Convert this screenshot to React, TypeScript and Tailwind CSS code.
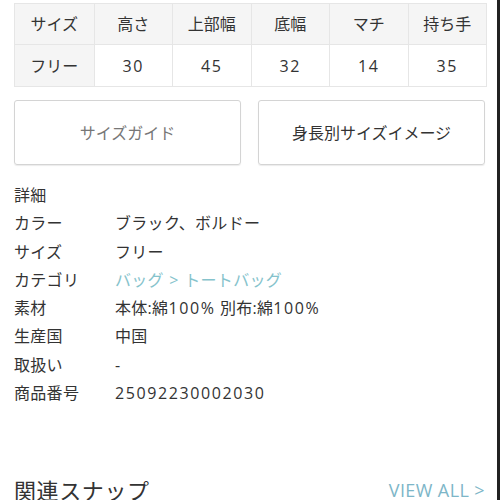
import React from "react";

const headers = ["サイズ", "高さ", "上部幅", "底幅", "マチ", "持ち手"];
const values = ["フリー", "30", "45", "32", "14", "35"];

const N = ({ children }: { children: React.ReactNode }) => (
  <span className="tracking-[1.6px]">{children}</span>
);

const rows: [string, React.ReactNode][] = [
  ["カラー", "ブラック、ボルドー"],
  ["サイズ", "フリー"],
  ["カテゴリ", <span className="text-[#86c3cc]">バッグ <span className="px-[1px]">&gt;</span> トートバッグ</span>],
  [
    "素材",
    <span>
      本体:綿<N>100%</N> 別布:綿<N>100%</N>
    </span>,
  ],
  ["生産国", "中国"],
  ["取扱い", "-"],
  ["商品番号", <N>25092230002030</N>],
];

export default function App() {
  return (
    <div
      className="relative w-[500px] h-[500px] overflow-hidden bg-white text-[#333]"
      style={{ fontFamily: '"Open Sans", "Noto Sans CJK JP", sans-serif' }}
    >
      <div className="absolute right-0 top-0 h-full w-[3px] bg-[#222]" />
      <div className="pl-[14px] pr-[13px] pt-[3px]">
        <div className="grid grid-cols-6 border border-[#e6e6e6] text-[16px]">
          {headers.map((h, i) => (
            <div
              key={h}
              className={`h-[41px] flex items-center justify-center bg-[#f5f5f5] border-b border-[#e6e6e6] ${i > 0 ? "border-l" : ""}`}
            >
              {h}
            </div>
          ))}
          {values.map((v, i) => (
            <div
              key={i}
              className={`h-[41px] flex items-center justify-center ${i === 0 ? "bg-[#f5f5f5]" : "bg-white border-l border-[#e6e6e6]"}`}
            >
              {i === 0 ? v : <N>{v}</N>}
            </div>
          ))}
        </div>
      </div>
      <div className="flex gap-[17px] pl-[14px] pr-[15px] mt-[13px]">
        <div className="w-[227px] h-[65px] flex items-center justify-center rounded-[3px] border border-[#d4d4d4] shadow-[0_1px_1px_rgba(0,0,0,0.08)] text-[16px] text-[#777]">
          サイズガイド
        </div>
        <div className="w-[227px] h-[65px] flex items-center justify-center rounded-[3px] border border-[#d4d4d4] shadow-[0_1px_1px_rgba(0,0,0,0.08)] text-[16px] text-[#333]">
          身長別サイズイメージ
        </div>
      </div>
      <div className="pl-[14px] mt-[16px] text-[16px] leading-[28.3px] tracking-[0.3px]">
        <div>詳細</div>
        {rows.map(([k, v]) => (
          <div key={k} className="flex">
            <div className="w-[101px]">{k}</div>
            <div>{v}</div>
          </div>
        ))}
      </div>
      <div className="absolute left-[14px] right-[15px] top-[474px] flex items-center justify-between">
        <div className="text-[22px] text-[#333] tracking-[0.6px]">関連スナップ</div>
        <div className="text-[18px] text-[#7db6c8] tracking-[0.4px]">
          VIEW ALL &gt;
        </div>
      </div>
    </div>
  );
}
